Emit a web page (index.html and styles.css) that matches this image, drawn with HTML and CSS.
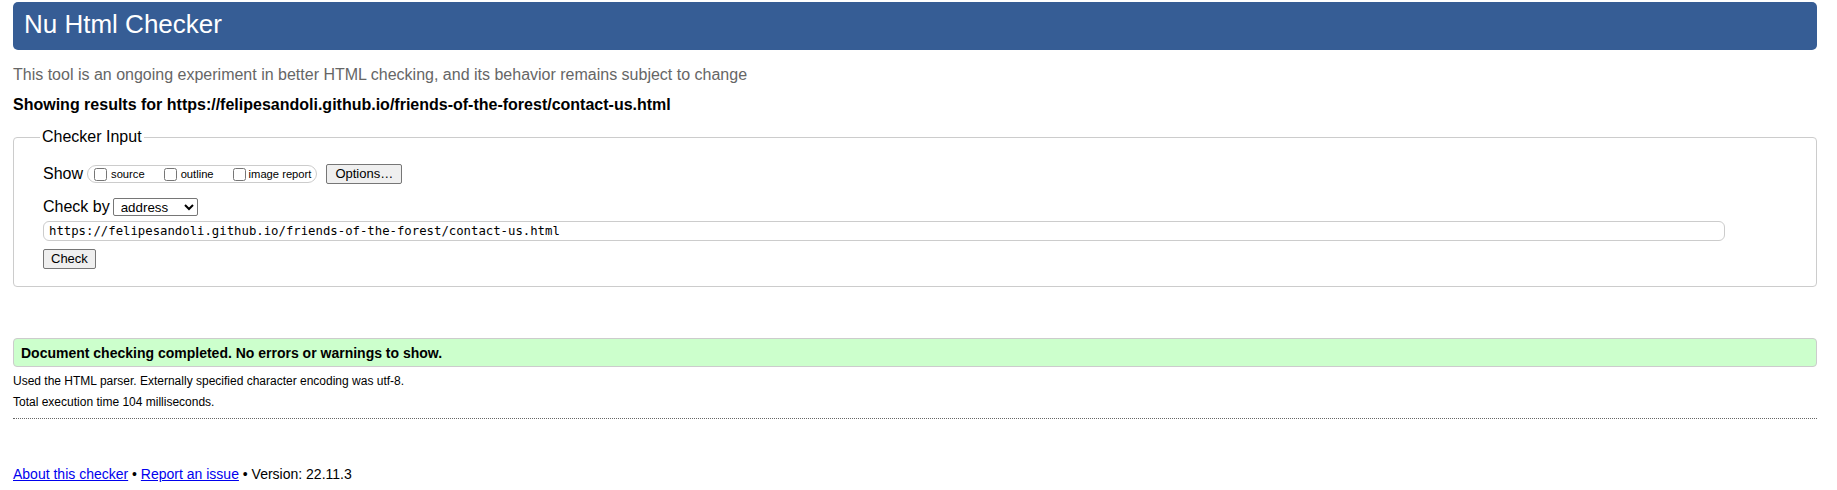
FILE: index.html
```html
<!DOCTYPE html>
<html lang="en">
<head>
<meta charset="utf-8">
<title>Nu Html Checker</title>
<link rel="stylesheet" href="styles.css">
</head>
<body>
<h1 class="title">Nu Html Checker</h1>
<p class="tagline">This tool is an ongoing experiment in better HTML checking, and its behavior remains subject to change</p>
<p class="results-for">Showing results for https://felipesandoli.github.io/friends-of-the-forest/contact-us.html</p>
<form class="form" onsubmit="return false">
  <fieldset class="checker">
    <legend class="legend">Checker Input</legend>
    <div class="row show-row">
      <span class="lbl">Show</span>
      <span class="show-group">
        <label class="opt"><input type="checkbox" class="cb"><span>source</span></label>
        <label class="opt"><input type="checkbox" class="cb"><span>outline</span></label>
        <label class="opt opt-last"><input type="checkbox" class="cb"><span>image report</span></label>
      </span>
      <button type="button" class="btn options">Options…</button>
    </div>
    <div class="row by-row">
      <span class="lbl">Check by</span>
      <select class="sel"><option>address</option><option>file upload</option><option>text input</option></select>
    </div>
    <input type="url" class="url" value="https://felipesandoli.github.io/friends-of-the-forest/contact-us.html">
    <div class="row submit-row">
      <button type="button" class="btn">Check</button>
    </div>
  </fieldset>
</form>
<p class="success">Document checking completed. No errors or warnings to show.</p>
<p class="details">Used the HTML parser. Externally specified character encoding was utf-8.</p>
<p class="details">Total execution time 104 milliseconds.</p>
<div class="sep"></div>
<p class="footer"><a href="#" class="link">About this checker</a> • <a href="#" class="link">Report an issue</a> • Version: 22.11.3</p>
</body>
</html>
```

FILE: styles.css
```css
html, body {
  background: #fff;
}
body {
  margin: 0;
  padding: 2px 20px 0 13px;
  font-family: "Liberation Sans", Arial, sans-serif;
  color: #000;
}
.title {
  margin: 0;
  height: 48px;
  box-sizing: border-box;
  padding: 7px 11px 0;
  background: #365d95;
  color: #fff;
  font-weight: normal;
  font-size: 26px;
  line-height: 30px;
  border-radius: 5px;
}
.tagline {
  margin: 16px 0 0;
  font-size: 16px;
  line-height: 18px;
  color: #666;
}
.results-for {
  margin: 12px 0 0;
  font-size: 16px;
  line-height: 18px;
  font-weight: bold;
  color: #000;
}
.form {
  margin: 0;
}
.checker {
  margin: 14px 0 0;
  padding: 18px 29px 17px;
  border: 1px solid #ccc;
  border-radius: 4px;
  min-width: 0;
}
.legend {
  padding: 0 2px;
  margin-left: -3px;
  font-size: 16px;
  line-height: 18px;
}
.row {
  display: flex;
  align-items: center;
}
.show-row {
  height: 20px;
}
.lbl {
  font-size: 16px;
  line-height: 18px;
  white-space: nowrap;
}
.show-group {
  display: inline-flex;
  align-items: center;
  gap: 19px;
  height: 18px;
  box-sizing: border-box;
  margin-left: 4px;
  padding: 0 5px 0 6px;
  border: 1px solid #ccc;
  border-radius: 9px;
}
.opt {
  display: inline-flex;
  align-items: center;
  gap: 4px;
  font-size: 11.2px;
  line-height: 13px;
}
.opt-last {
  gap: 3px;
}
.cb {
  margin: 0;
  width: 13px;
  height: 13px;
}
.btn {
  font-family: "Liberation Sans", Arial, sans-serif;
  font-size: 13px;
  line-height: 16px;
  height: 20px;
  box-sizing: border-box;
  padding: 0 7px;
  margin: 0;
  background: #efefef;
  border: 1px solid #767676;
  border-radius: 2px;
  color: #000;
}
.options {
  margin-left: 9px;
  padding: 0 8px;
}
.by-row {
  margin-top: 14px;
  height: 18px;
}
.sel {
  margin: 0 0 0 3px;
  width: 85px;
  height: 18px;
  box-sizing: border-box;
  padding: 0 0 0 3px;
  font-family: "Liberation Sans", Arial, sans-serif;
  font-size: 13.33px;
  border: 1px solid #767676;
  border-radius: 2px;
  background: #fff;
  color: #000;
}
.url {
  display: block;
  margin: 5px 0 0;
  width: calc(100% - 62px);
  height: 20px;
  box-sizing: border-box;
  padding: 0 5px;
  font-family: "DejaVu Sans Mono", "Liberation Mono", monospace;
  font-size: 12.3px;
  border: 1px solid #ccc;
  border-radius: 6px;
  color: #000;
  background: #fff;
}
.submit-row {
  margin-top: 8px;
  height: 20px;
}
.success {
  margin: 51px 0 0;
  padding: 6px 7px 5px;
  background: #ccffcc;
  border: 1px solid #ccc;
  border-radius: 4px;
  font-size: 14px;
  line-height: 16px;
  font-weight: bold;
}
.details {
  margin: 7px 0 0;
  font-size: 12px;
  line-height: 14px;
}
.sep {
  margin-top: 9px;
  height: 0;
  border-top: 1px dotted #666;
}
.footer {
  margin: 47px 0 0;
  font-size: 14px;
  line-height: 16px;
}
.link {
  color: #0000ee;
  text-decoration: underline;
}
```
